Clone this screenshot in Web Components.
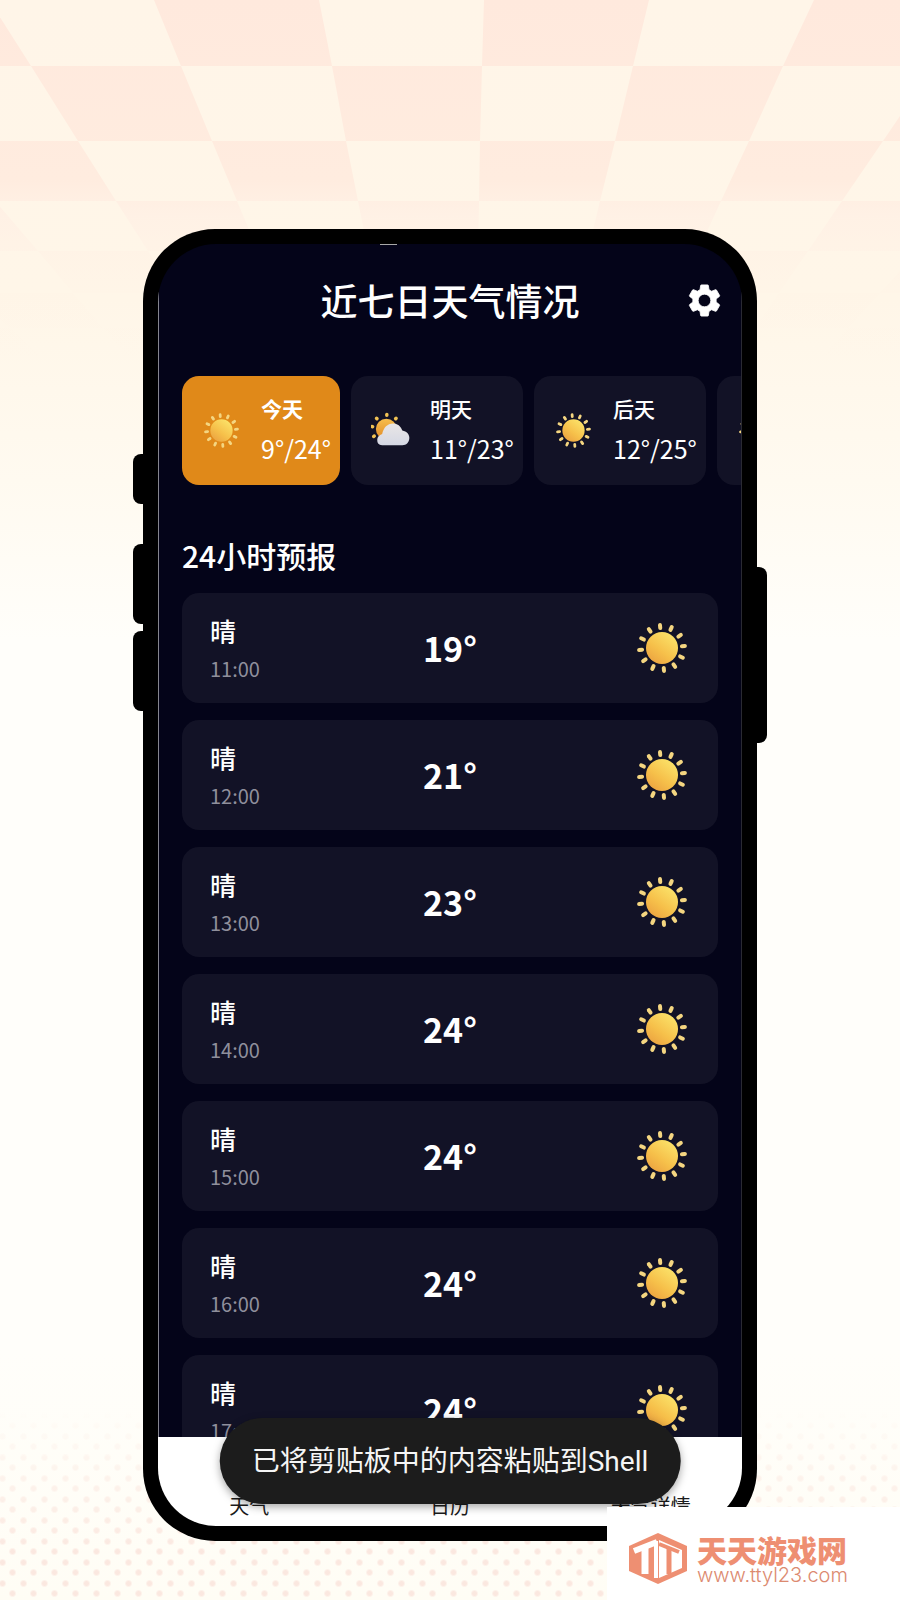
<!DOCTYPE html>
<html lang="zh-CN">
<head>
<meta charset="utf-8">
<meta name="viewport" content="width=device-width, initial-scale=1">
<title>近七日天气情况</title>
<style>
  body {
    margin: 0;
    font-family: "Noto Sans CJK SC", sans-serif;
  }
</style>
</head>
<body>
<weather-stage>
  <phone-frame>
    <app-header>近七日天气情况</app-header>
    <day-strip>
      <day-card icon="sun" low="9" high="24" active>今天</day-card>
      <day-card icon="cloud" low="11" high="23">明天</day-card>
      <day-card icon="sun" low="12" high="25">后天</day-card>
      <day-card icon="sun" low="" high=""></day-card>
    </day-strip>
    <hour-list heading="24小时预报">
      <hour-row time="11:00" temp="19">晴</hour-row>
      <hour-row time="12:00" temp="21">晴</hour-row>
      <hour-row time="13:00" temp="23">晴</hour-row>
      <hour-row time="14:00" temp="24">晴</hour-row>
      <hour-row time="15:00" temp="24">晴</hour-row>
      <hour-row time="16:00" temp="24">晴</hour-row>
      <hour-row time="17:00" temp="24">晴</hour-row>
    </hour-list>
    <tab-bar slot="nav">
      <a href="#weather">天气</a>
      <a href="#calendar">日历</a>
      <a href="#details">天气详情</a>
    </tab-bar>
    <toast-message slot="toast">已将剪贴板中的内容粘贴到Shell</toast-message>
  </phone-frame>
  <site-badge slot="badge" url="www.ttyl23.com">天天游戏网</site-badge>
</weather-stage>

<script>
  class WeatherStage extends HTMLElement {
    constructor() {
      super();
      this.attachShadow({ mode: 'open' });
      this.render();
    }

    // checker floor seen in perspective, columns narrow towards the horizon
    tiles() {
      const rows = [0, 66, 141, 201, 251, 293, 328, 357];
      const x = (k, y) => Math.round(484 - y * 0.025 + k * (165 - y * 0.219));
      let out = '';
      for (let r = 0; r < rows.length - 1; r++) {
        const top = rows[r];
        const bottom = rows[r + 1];
        for (let k = -8; k < 8; k++) {
          if ((k + r) % 2 !== 0) continue;
          out += `<polygon points="${x(k, top)},${top} ${x(k + 1, top)},${top} ${x(k + 1, bottom)},${bottom} ${x(k, bottom)},${bottom}"/>`;
        }
      }
      return out;
    }

    render() {
      this.shadowRoot.innerHTML = `
        <style>
          :host {
            display: grid;
            grid-template-columns: minmax(0, 1fr);
            grid-template-rows: minmax(0, 1fr);
            position: relative;
            height: 100vh;
            overflow: hidden;
            background: linear-gradient(#fff5e8 0, #fff6e8 300px, #fffaf0 480px, #fffefa 640px, #fffefa 1350px, #fffdf5 100%);
          }
          .floor, .dots, .content {
            grid-area: 1 / 1;
          }
          .floor {
            width: 100%;
            height: 360px;
          }
          .dots {
            align-self: end;
            height: 190px;
            background-image:
              radial-gradient(circle, #fbe8e0 2px, transparent 4px),
              radial-gradient(circle, #fbe8e0 2px, transparent 4px);
            background-size: 21px 21px;
            background-position: 2px 5px, 13px 16px;
            -webkit-mask-image: linear-gradient(transparent, #000 75%);
            mask-image: linear-gradient(transparent, #000 75%);
          }
          .content {
            position: relative;
            display: grid;
            grid-template-columns: minmax(0, 614px);
            grid-template-rows: minmax(0, 1fr);
            justify-content: center;
            padding: 229px 24px 59px;
          }
          ::slotted([slot="badge"]) {
            position: absolute;
            right: 0;
            bottom: 0;
          }
        </style>
        <svg class="floor" viewBox="0 0 900 360" preserveAspectRatio="xMidYMin slice" aria-hidden="true">
          <defs>
            <linearGradient id="fade" x1="0" y1="0" x2="0" y2="360" gradientUnits="userSpaceOnUse">
              <stop offset="0" stop-color="#ffe9dd"/>
              <stop offset="0.5" stop-color="#ffecdf"/>
              <stop offset="0.6" stop-color="#ffefe4" stop-opacity="0.7"/>
              <stop offset="0.8" stop-color="#fff1e4" stop-opacity="0.2"/>
              <stop offset="1" stop-color="#fff1e4" stop-opacity="0"/>
            </linearGradient>
          </defs>
          <g fill="url(#fade)">${this.tiles()}</g>
        </svg>
        <div class="dots"></div>
        <div class="content"><slot></slot></div>
        <slot name="badge"></slot>
      `;
    }
  }

  class PhoneFrame extends HTMLElement {
    constructor() {
      super();
      this.attachShadow({ mode: 'open' });
      this.shadowRoot.innerHTML = `
        <style>
          :host {
            display: grid;
            grid-template-rows: minmax(0, 1fr);
            position: relative;
            box-sizing: border-box;
            padding: 15px;
            border-radius: 72px;
            background: #000;
          }
          .key {
            position: absolute;
            width: 20px;
            background: #000;
            border-radius: 8px;
          }
          .mute { left: -10px; top: 225px; height: 50px; }
          .up { left: -10px; top: 315px; height: 80px; }
          .down { left: -10px; top: 402px; height: 80px; }
          .power { right: -10px; top: 338px; height: 176px; }
          .screen {
            position: relative;
            display: flex;
            flex-direction: column;
            min-height: 0;
            overflow: hidden;
            border-radius: 58px;
          }
          /* the thin edge lines start below the rounded corners */
          .app {
            flex: 1;
            min-height: 0;
            overflow: hidden;
            display: flex;
            flex-direction: column;
            padding: 0 1px;
            background:
              linear-gradient(transparent 48px, #85858f 48px) left / 1px 100% no-repeat,
              linear-gradient(transparent 48px, #2a2a33 48px) right / 1px 100% no-repeat,
              #040419;
            color: #fff;
          }
          .glint {
            position: absolute;
            left: 222px;
            top: 0;
            width: 17px;
            height: 1px;
            background: #a8a8a8;
          }
          ::slotted([slot="toast"]) {
            position: absolute;
            left: 50%;
            bottom: 37px;
            transform: translateX(-50%);
          }
        </style>
        <i class="key mute"></i>
        <i class="key up"></i>
        <i class="key down"></i>
        <i class="key power"></i>
        <div class="screen">
          <div class="app"><slot></slot></div>
          <slot name="nav"></slot>
          <i class="glint"></i>
        </div>
        <slot name="toast"></slot>
      `;
    }
  }

  class AppHeader extends HTMLElement {
    constructor() {
      super();
      this.attachShadow({ mode: 'open' });
      this.shadowRoot.innerHTML = `
        <style>
          :host {
            display: grid;
            grid-template-columns: 1fr auto 1fr;
            align-items: center;
            flex: none;
            height: 112px;
            padding: 0 17px;
          }
          h1 {
            grid-column: 2;
            margin: 0;
            font-size: 37px;
            font-weight: 500;
            line-height: 48px;
          }
          button {
            justify-self: end;
            display: block;
            padding: 0;
            border: 0;
            background: none;
            color: #fff;
          }
          svg {
            display: block;
            width: 39px;
            height: 39px;
          }
        </style>
        <h1><slot></slot></h1>
        <button type="button" aria-label="设置">
          <svg viewBox="0 0 24 24" fill="currentColor" aria-hidden="true">
            <path d="M19.14 12.94c.04-.3.06-.61.06-.94 0-.32-.02-.64-.07-.94l2.03-1.58a.49.49 0 0 0 .12-.61l-1.92-3.32a.49.49 0 0 0-.59-.22l-2.39.96a7 7 0 0 0-1.62-.94l-.36-2.54a.48.48 0 0 0-.48-.41h-3.84a.48.48 0 0 0-.47.41l-.36 2.54c-.59.24-1.13.57-1.62.94l-2.39-.96a.48.48 0 0 0-.59.22L2.74 8.87a.48.48 0 0 0 .12.61l2.03 1.58c-.05.3-.09.63-.09.94s.02.64.07.94l-2.03 1.58a.49.49 0 0 0-.12.61l1.92 3.32c.12.22.37.29.59.22l2.39-.96c.5.38 1.03.7 1.62.94l.36 2.54c.05.24.24.41.48.41h3.84c.24 0 .44-.17.47-.41l.36-2.54a7 7 0 0 0 1.62-.94l2.39.96c.22.08.47 0 .59-.22l1.92-3.32a.48.48 0 0 0-.12-.61zM12 15.9A3.9 3.9 0 1 1 12 8.1a3.9 3.9 0 0 1 0 7.8z" stroke="currentColor" stroke-width="0.5"/>
          </svg>
        </button>
      `;
    }
  }

  class WeatherIcon extends HTMLElement {
    constructor() {
      super();
      this.attachShadow({ mode: 'open' });
      this.render();
    }

    rays(cx, cy, from, to, width, angles) {
      return angles.map(a =>
        `<line x1="${cx}" y1="${cy - from}" x2="${cx}" y2="${cy - to}" stroke-width="${width}" transform="rotate(${a} ${cx} ${cy})"/>`
      ).join('');
    }

    render() {
      const cloudy = this.getAttribute('kind') === 'cloud';
      const circle = Array.from({ length: 12 }, (_, i) => i * 30 - 5);
      const sun = `
        <g stroke="url(#ray)" stroke-linecap="round">${this.rays(28, 28, 20, 23, 4, circle)}</g>
        <circle cx="28" cy="28" r="16" fill="url(#disc)"/>`;
      const cloud = `
        <g stroke="#f0c254" stroke-linecap="round">${this.rays(22, 26, 20, 21, 5, [-120, -80, -42, 2, 42])}</g>
        <circle cx="22" cy="26" r="15" fill="url(#warm)"/>
        <path d="M16 49c-5 0-7-3-7-7 0-5 3-7 7-9 2-10 9-16 17-15 7 1 10 5 12 10 6 1 11 6 10 12-1 6-4 9-10 9z" fill="url(#puff)"/>`;
      this.shadowRoot.innerHTML = `
        <style>
          :host { display: block; }
          svg {
            display: block;
            width: 100%;
            height: 100%;
          }
        </style>
        <svg viewBox="0 0 56 56" aria-hidden="true">
          <defs>
            <linearGradient id="disc" x1="0.2" y1="0.9" x2="0.8" y2="0.1">
              <stop offset="0" stop-color="#eda742"/>
              <stop offset="0.4" stop-color="#f6c04a"/>
              <stop offset="1" stop-color="#fbe067"/>
            </linearGradient>
            <linearGradient id="ray" x1="6" y1="50" x2="50" y2="6" gradientUnits="userSpaceOnUse">
              <stop offset="0" stop-color="#e9b765"/>
              <stop offset="1" stop-color="#f8e08a"/>
            </linearGradient>
            <linearGradient id="warm" x1="0" y1="0" x2="0" y2="1">
              <stop offset="0" stop-color="#f7be4c"/>
              <stop offset="1" stop-color="#e08a28"/>
            </linearGradient>
            <linearGradient id="puff" x1="0" y1="0" x2="0" y2="1">
              <stop offset="0" stop-color="#e9e6e6"/>
              <stop offset="1" stop-color="#d5d8e4"/>
            </linearGradient>
          </defs>
          ${cloudy ? cloud : sun}
        </svg>
      `;
    }
  }

  class DayStrip extends HTMLElement {
    constructor() {
      super();
      this.attachShadow({ mode: 'open' });
      this.shadowRoot.innerHTML = `
        <style>
          :host {
            display: flex;
            flex: none;
            gap: 11px;
            margin-top: 20px;
            padding-left: 23px;
            overflow: hidden;
          }
        </style>
        <slot></slot>
      `;
    }
  }

  class DayCard extends HTMLElement {
    constructor() {
      super();
      this.attachShadow({ mode: 'open' });
      this.render();
    }

    render() {
      const low = this.getAttribute('low');
      const high = this.getAttribute('high');
      const temps = low ? `${low}°/${high}°` : '';
      this.shadowRoot.innerHTML = `
        <style>
          :host {
            display: block;
            flex: none;
          }
          button {
            display: flex;
            align-items: center;
            gap: 20px;
            box-sizing: border-box;
            height: 109px;
            min-width: 172px;
            padding: 0 8px 0 20px;
            border: 0;
            border-radius: 17px;
            background: #121226;
            color: #fff;
            font: inherit;
            text-align: left;
          }
          :host([active]) button {
            min-width: 158px;
            background: #e08919;
          }
          weather-icon {
            width: 39px;
            height: 39px;
          }
          .text {
            display: flex;
            flex-direction: column;
            padding-bottom: 6px;
          }
          .name {
            font-size: 21px;
            font-weight: 500;
            line-height: 40px;
          }
          :host([active]) .name {
            font-weight: 700;
          }
          .temps {
            font-size: 25px;
            line-height: 40px;
          }
        </style>
        <button type="button">
          <weather-icon kind="${this.getAttribute('icon')}"></weather-icon>
          <span class="text">
            <span class="name"><slot></slot></span>
            <span class="temps">${temps}</span>
          </span>
        </button>
      `;
    }
  }

  class HourList extends HTMLElement {
    constructor() {
      super();
      this.attachShadow({ mode: 'open' });
      this.shadowRoot.innerHTML = `
        <style>
          :host {
            display: flex;
            flex-direction: column;
            flex: 1;
            min-height: 0;
            overflow: hidden;
            padding: 50px 23px 0;
          }
          h2 {
            flex: none;
            margin: 0 0 18px;
            font-size: 30px;
            font-weight: 500;
            line-height: 40px;
          }
          .rows {
            display: flex;
            flex-direction: column;
            gap: 17px;
          }
        </style>
        <h2>${this.getAttribute('heading')}</h2>
        <div class="rows"><slot></slot></div>
      `;
    }
  }

  class HourRow extends HTMLElement {
    constructor() {
      super();
      this.attachShadow({ mode: 'open' });
      this.shadowRoot.innerHTML = `
        <style>
          :host {
            display: grid;
            grid-template-columns: 1fr auto 1fr;
            align-items: center;
            flex: none;
            box-sizing: border-box;
            height: 110px;
            padding: 0 28px;
            border-radius: 17px;
            background: #121226;
          }
          .when {
            display: flex;
            flex-direction: column;
            padding-top: 4px;
          }
          .sky {
            font-size: 26px;
            font-weight: 500;
            line-height: 38px;
          }
          time {
            font-size: 20px;
            line-height: 38px;
            color: #8f8f9c;
          }
          .temp {
            font-size: 34px;
            font-weight: 700;
            line-height: 40px;
          }
          weather-icon {
            justify-self: end;
            width: 56px;
            height: 56px;
          }
        </style>
        <div class="when">
          <span class="sky"><slot></slot></span>
          <time>${this.getAttribute('time')}</time>
        </div>
        <span class="temp">${this.getAttribute('temp')}°</span>
        <weather-icon kind="sun"></weather-icon>
      `;
    }
  }

  class TabBar extends HTMLElement {
    constructor() {
      super();
      this.attachShadow({ mode: 'open' });
      this.shadowRoot.innerHTML = `
        <style>
          :host {
            display: grid;
            grid-template-columns: 5fr 6fr 5fr;
            align-items: end;
            flex: none;
            box-sizing: border-box;
            height: 89px;
            padding-bottom: 6px;
            background: #fff;
          }
          ::slotted(a) {
            font-size: 20px;
            line-height: 28px;
            color: #1b1b1b;
            text-align: center;
            text-decoration: none;
          }
        </style>
        <slot></slot>
      `;
    }
  }

  class ToastMessage extends HTMLElement {
    constructor() {
      super();
      this.attachShadow({ mode: 'open' });
      this.setAttribute('role', 'status');
      this.shadowRoot.innerHTML = `
        <style>
          :host {
            display: block;
            padding: 24px 32px 22px;
            border-radius: 43px;
            background: #1c1c1c;
            box-shadow: 0 3px 8px rgba(0, 0, 0, 0.35);
            color: #f5f5f5;
            font-family: Roboto, "Noto Sans CJK SC", sans-serif;
            font-size: 28px;
            line-height: 40px;
            white-space: nowrap;
          }
        </style>
        <slot></slot>
      `;
    }
  }

  class SiteBadge extends HTMLElement {
    constructor() {
      super();
      this.attachShadow({ mode: 'open' });
      this.shadowRoot.innerHTML = `
        <style>
          :host {
            display: flex;
            align-items: center;
            gap: 10px;
            box-sizing: border-box;
            width: 293px;
            height: 93px;
            padding: 10px 20px 0 22px;
            background: #fff;
            color: #ee8f72;
          }
          svg {
            width: 58px;
            height: 51px;
          }
          .text {
            display: flex;
            flex-direction: column;
          }
          strong {
            font-size: 30px;
            font-weight: 900;
            line-height: 32px;
          }
          a {
            font-family: Inter, "Liberation Sans", sans-serif;
            font-size: 20px;
            font-weight: 300;
            line-height: 20px;
            color: #dc8a70;
            text-decoration: none;
          }
        </style>
        <svg viewBox="0 0 58 51" aria-hidden="true">
          <path d="M29 0 58 13V38L29 51 0 38V13z" fill="#ee8f72"/>
          <path d="M30 7 53 17V35L30 45z" fill="#fff"/>
          <g fill="none" stroke="#fff">
            <path d="M5 18 28 9" stroke-width="6"/>
            <path d="M16 13V41" stroke-width="7"/>
            <path d="M27 8V45" stroke-width="4"/>
          </g>
          <g fill="none" stroke="#ee8f72">
            <path d="M30 11 50 19" stroke-width="4"/>
            <path d="M40 14V41" stroke-width="5"/>
          </g>
        </svg>
        <span class="text">
          <strong><slot></slot></strong>
          <a href="#home">${this.getAttribute('url')}</a>
        </span>
      `;
    }
  }

  customElements.define('weather-icon', WeatherIcon);
  customElements.define('weather-stage', WeatherStage);
  customElements.define('phone-frame', PhoneFrame);
  customElements.define('app-header', AppHeader);
  customElements.define('day-strip', DayStrip);
  customElements.define('day-card', DayCard);
  customElements.define('hour-list', HourList);
  customElements.define('hour-row', HourRow);
  customElements.define('tab-bar', TabBar);
  customElements.define('toast-message', ToastMessage);
  customElements.define('site-badge', SiteBadge);
</script>
</body>
</html>
